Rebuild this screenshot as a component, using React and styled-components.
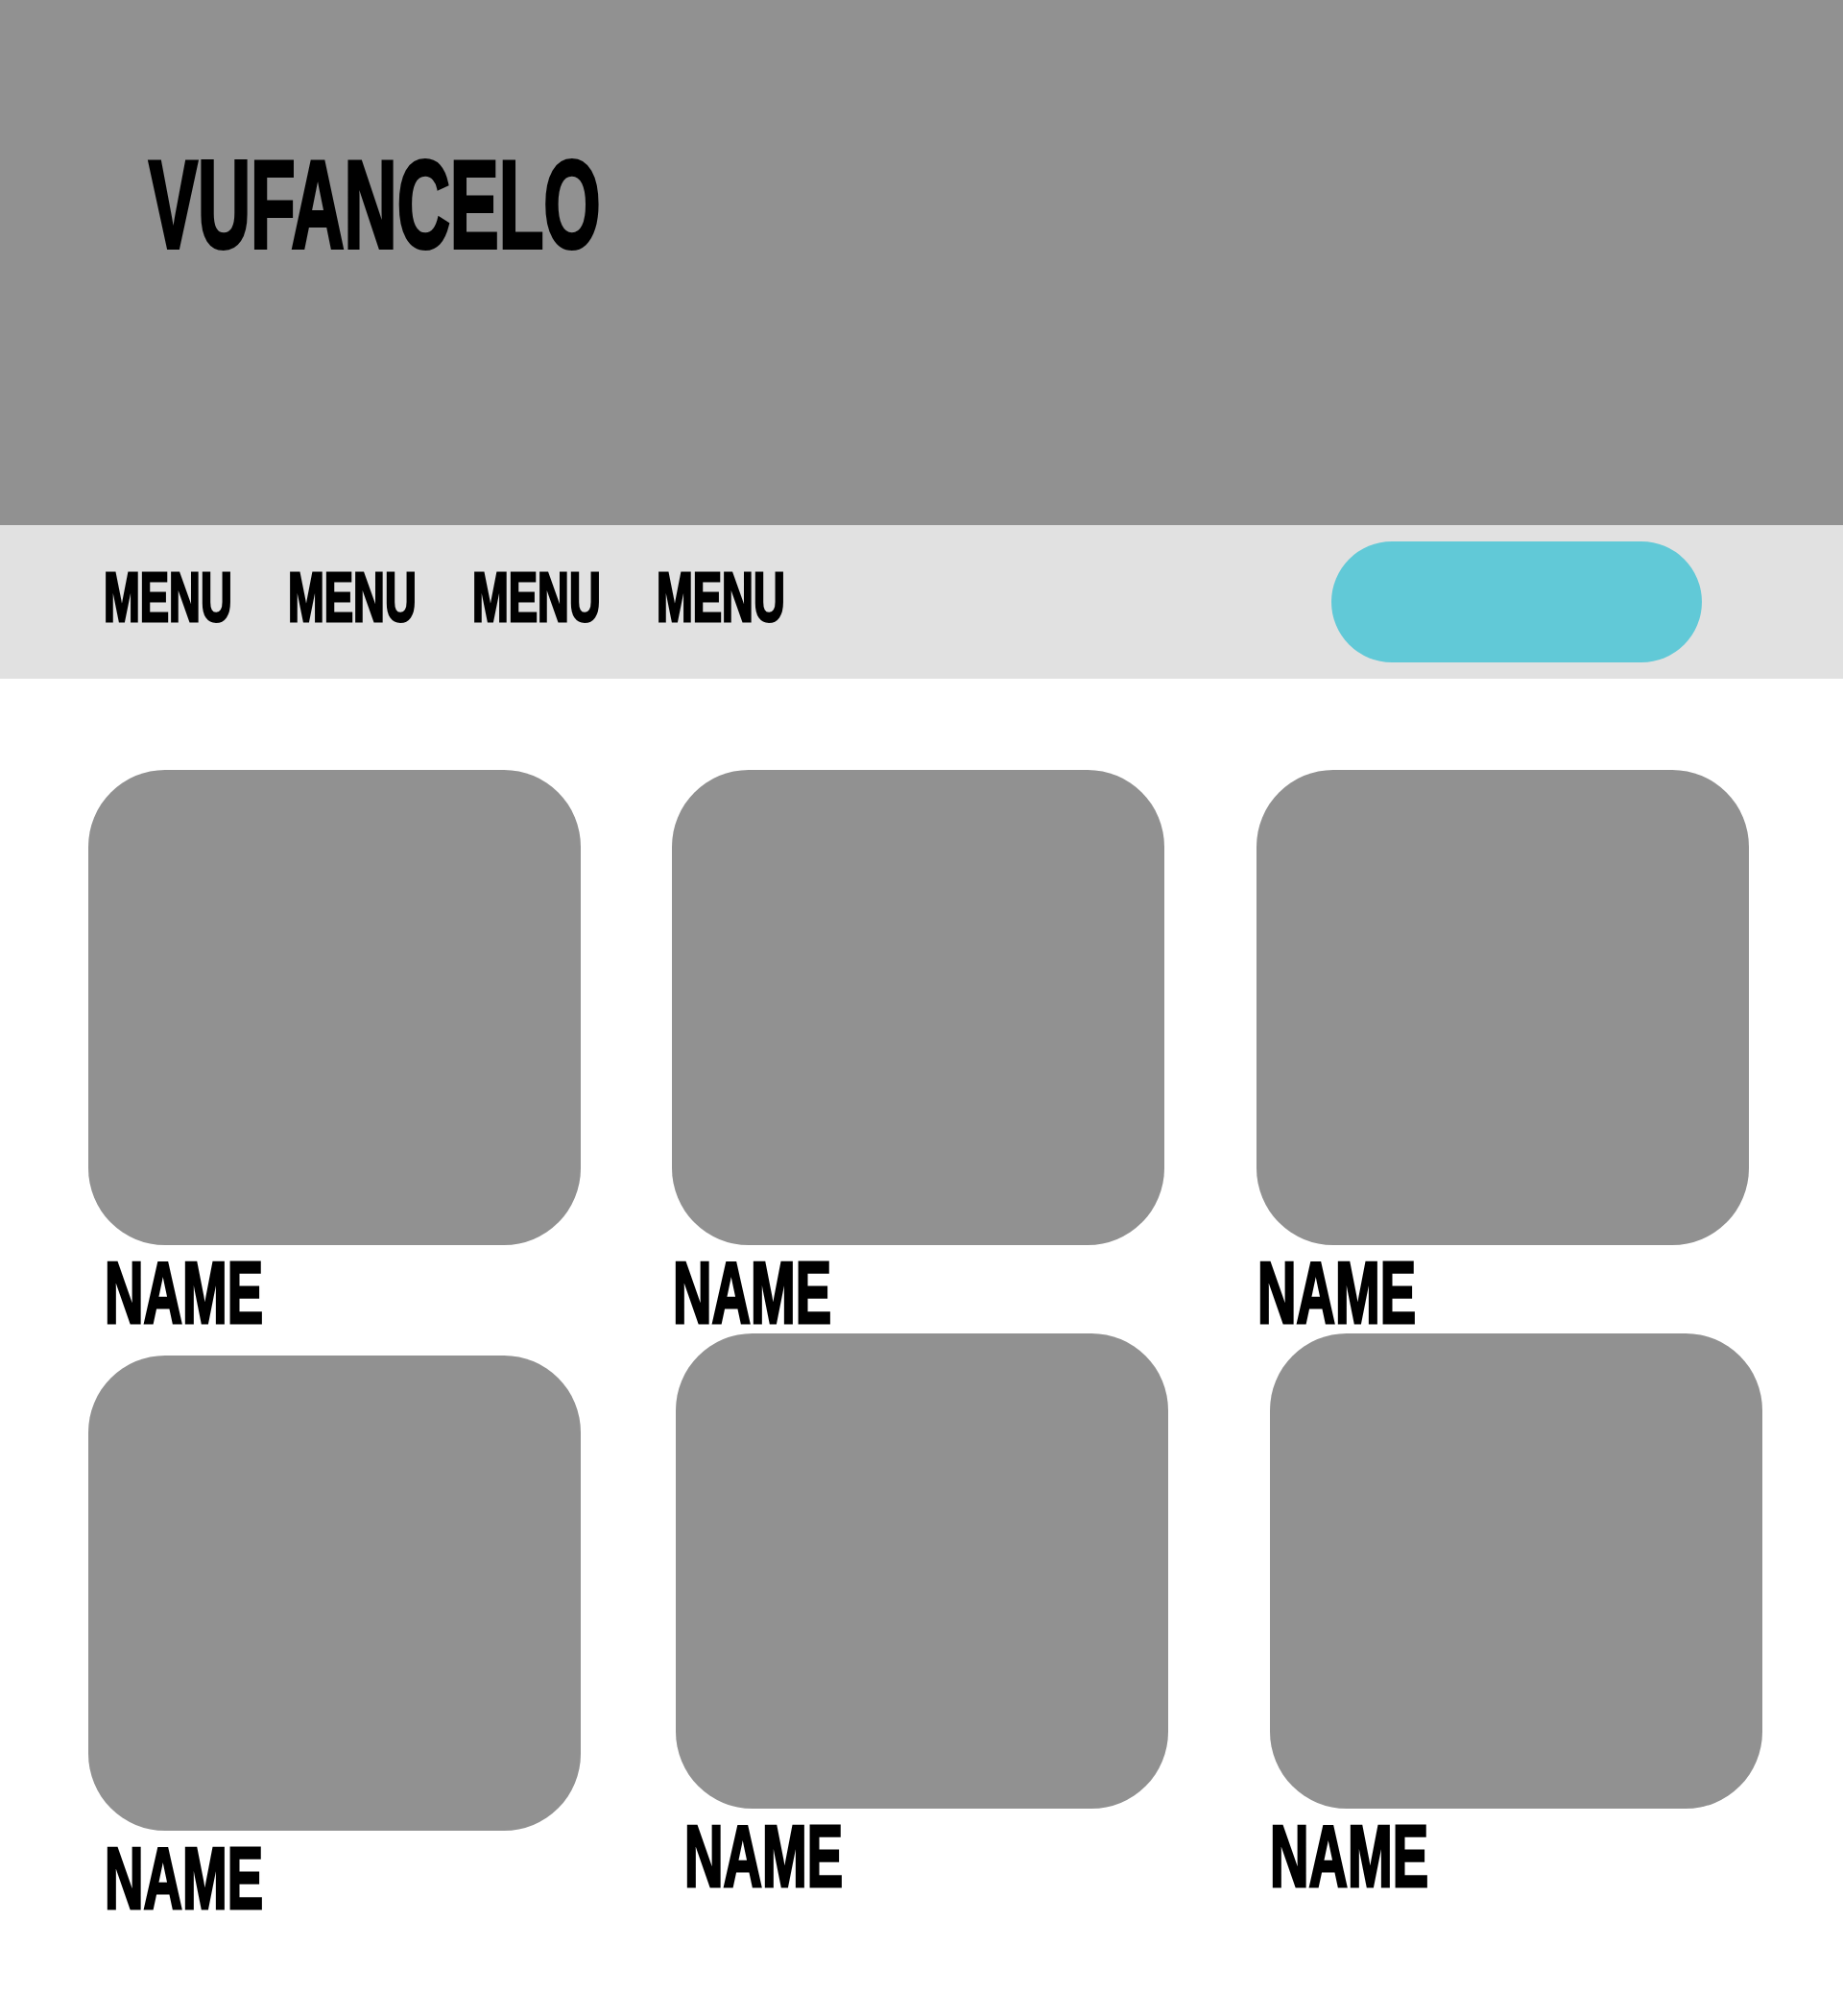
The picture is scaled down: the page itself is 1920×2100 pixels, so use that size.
import React from 'react'
import styled, { createGlobalStyle } from 'styled-components'

const GlobalStyle = createGlobalStyle`
body {
  margin: 0;
  background: #FFFFFF;
  font-family: 'Liberation Sans', Arial, sans-serif;
  color: #000000;
}
`

const Page = styled.div`
min-height: 2100px;
background: #FFFFFF;
`

// squeezes a bold sans into the tall, heavy condensed look of the mockup
const Condensed = styled.span`
display: inline-block;
white-space: nowrap;
-webkit-text-stroke: ${p => p.$stroke || 0}px #000000;
transform: scaleX(${p => p.$sx});
transform-origin: left center;
`

const Masthead = styled.header`
box-sizing: border-box;
height: 547px;
padding: 148px 0 0 155px;
background: #919191;
`

const Brand = styled.h1`
margin: 0;
font-size: 130px;
line-height: 1;
font-weight: 700;
`

const NavBar = styled.nav`
box-sizing: border-box;
display: flex;
justify-content: space-between;
align-items: center;
height: 160px;
padding: 0 147px 0 108px;
background: #E1E1E1;
`

const MenuList = styled.ul`
display: flex;
gap: 63px;
align-self: flex-start;
list-style: none;
margin: 38px 0 0;
padding: 0;
`

const MenuItem = styled.li`
width: 129px;
font-size: 73px;
line-height: 1;
font-weight: 700;
cursor: pointer;
`

const CtaButton = styled.button`
width: 386px;
height: 126px;
border: none;
border-radius: 63px;
background: #61C9D7;
cursor: pointer;
`

const Gallery = styled.main`
display: grid;
grid-template-columns: repeat(3, 513px);
column-gap: 95px;
row-gap: 7px;
align-items: start;
padding: 95px 0 0 92px;
`

const Tile = styled.div`
margin: ${p => p.$dy || 0}px 0 0 ${p => p.$dx || 0}px;
`

const Thumb = styled.div`
width: 513px;
height: 495px;
border-radius: 80px;
background: #919191;
`

const Name = styled.p`
margin: 15px 0 0;
padding-left: ${p => p.$inset || 0}px;
font-size: 90px;
line-height: 70px;
font-weight: 700;
`

const tiles = [
  { dx: 0, dy: 0, inset: 17 },
  { dx: 0, dy: 0, inset: 1 },
  { dx: 1, dy: 0, inset: 1 },
  { dx: 0, dy: 23, inset: 17 },
  { dx: 4, dy: 0, inset: 9 },
  { dx: 15, dy: 0, inset: 0 },
]

function App() {
  return (
    <Page>
      <GlobalStyle />
      <Masthead>
        <Brand><Condensed $sx={0.587} $stroke={4}>VUFANCELO</Condensed></Brand>
      </Masthead>
      <NavBar>
        <MenuList>
          {[1, 2, 3, 4].map(i => (
            <MenuItem key={i}><Condensed $sx={0.622} $stroke={3}>MENU</Condensed></MenuItem>
          ))}
        </MenuList>
        <CtaButton aria-label="action" />
      </NavBar>
      <Gallery>
        {tiles.map((t, i) => (
          <Tile key={i} $dx={t.dx} $dy={t.dy}>
            <Thumb />
            <Name $inset={t.inset}><Condensed $sx={0.623} $stroke={3}>NAME</Condensed></Name>
          </Tile>
        ))}
      </Gallery>
    </Page>
  )
}

export default App
